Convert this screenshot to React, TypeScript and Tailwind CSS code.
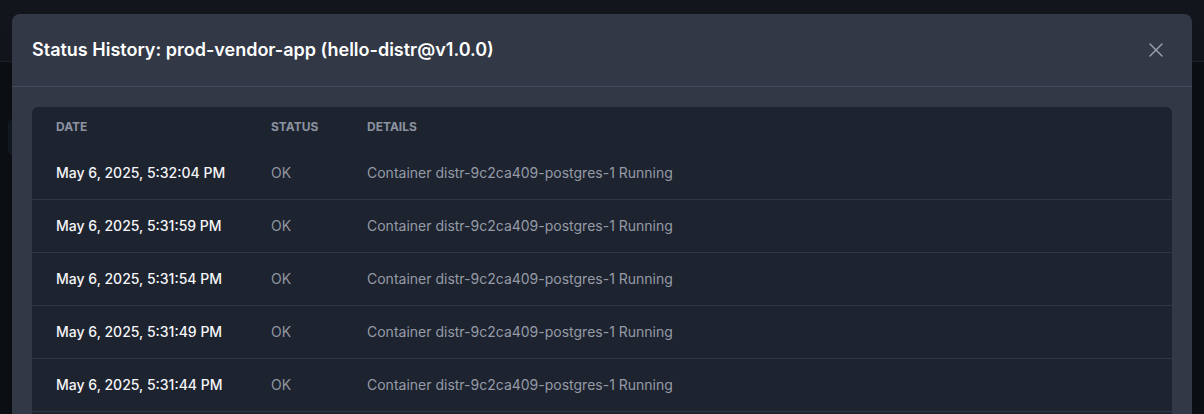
import { X } from 'lucide-react';

const rows = [
  'May 6, 2025, 5:32:04 PM',
  'May 6, 2025, 5:31:59 PM',
  'May 6, 2025, 5:31:54 PM',
  'May 6, 2025, 5:31:49 PM',
  'May 6, 2025, 5:31:44 PM',
];

export default function App() {
  return (
    <div className="relative h-[414px] w-full overflow-hidden bg-[#10131a] font-['Inter','Liberation_Sans',sans-serif]">
      {/* page behind the dialog */}
      <div className="h-[62px] border-b border-[#262b35] bg-[#171b24]" />
      <div className="flex px-2 pt-14">
        <div className="h-[38px] w-[120px] rounded-md bg-[#1a1e27]" />
      </div>
      <div className="absolute inset-0 bg-black/20" />

      {/* dialog */}
      <div className="absolute left-3 right-3 top-[14px] h-[440px] rounded-t-lg bg-[#323845] shadow-xl">
        <div className="flex items-center justify-between border-b border-[#434a59] px-5 py-[22px]">
          <h2 className="text-lg font-semibold leading-7 text-white">
            Status History: prod-vendor-app (hello-distr@v1.0.0)
          </h2>
          <button className="mr-1 text-[#9aa1ad]">
            <X size={24} strokeWidth={1.4} />
          </button>
        </div>

        <div className="p-5">
          <div className="min-h-[330px] overflow-hidden rounded-md bg-[#1e2330]">
            <table className="w-full table-fixed text-left">
              <colgroup>
                <col className="w-[215px]" />
                <col className="w-[96px]" />
                <col />
              </colgroup>
              <thead>
                <tr className="text-xs font-bold uppercase leading-4 text-[#8c93a0]">
                  <th className="px-6 py-3 font-bold">Date</th>
                  <th className="px-6 py-3 font-bold">Status</th>
                  <th className="px-6 py-3 font-bold">Details</th>
                </tr>
              </thead>
              <tbody className="text-sm leading-5">
                {rows.map((d) => (
                  <tr key={d} className="border-b border-[#2f3543]">
                    <td className="whitespace-nowrap px-6 py-4 font-medium text-[#f5f6f8]">{d}</td>
                    <td className="px-6 py-4 text-[#8f95a0]">OK</td>
                    <td className="px-6 py-4 text-[#959ba6]">Container distr-9c2ca409-postgres-1 Running</td>
                  </tr>
                ))}
              </tbody>
            </table>
          </div>
        </div>
      </div>
    </div>
  );
}
